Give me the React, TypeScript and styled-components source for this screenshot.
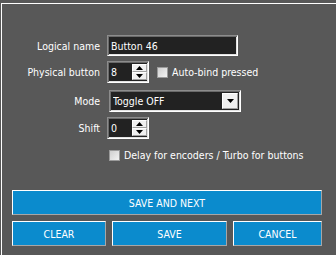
import React from 'react'
import styled, {createGlobalStyle} from 'styled-components'

const GlobalStyle = createGlobalStyle`
  html, body {
    margin: 0;
    padding: 0;
    background: #585858;
    overflow: hidden;
  }
  body {
    font-family: "DejaVu Sans Condensed", "Liberation Sans", sans-serif;
    font-size: 10.5px;
    color: #ffffff;
  }
`

const Page = styled.div`
  width: 336px;
  height: 255px;
  padding: 3px 0 0 1px;
  box-sizing: border-box;
  overflow: hidden;
`

const GroupBox = styled.div`
  width: 350px;
  height: 270px;
  box-sizing: border-box;
  border-top: 1px solid #ffffff;
  border-left: 1px solid #ffffff;
  padding: 31px 0 0 0;
`

const Form = styled.div`
  display: flex;
  flex-direction: column;
  padding-left: 6px;
`

const Row = styled.div<{$top: number}>`
  display: grid;
  grid-template-columns: 92px auto;
  column-gap: 7px;
  align-items: center;
  margin-top: ${(p) => p.$top}px;
`

const Label = styled.label`
  justify-self: end;
  white-space: nowrap;
`

const Field = styled.div`
  display: flex;
  align-items: center;
`

const Sunken = styled.div<{$w: number; $h: number}>`
  width: ${(p) => p.$w}px;
  height: ${(p) => p.$h}px;
  box-sizing: border-box;
  background: #222222;
  border-top: 1px solid #8c8c8c;
  border-left: 1px solid #8c8c8c;
  border-right: 1px solid #ffffff;
  border-bottom: 1px solid #ffffff;
  box-shadow: inset 1px 1px 0 #6a6a6a, inset -1px -1px 0 #e2e2e2;
  display: flex;
  align-items: center;
  padding: 2px 2px 2px 3px;
  white-space: nowrap;
`

const SpinField = styled(Sunken)`
  padding-right: 1px;
`

const ComboBox = styled(Sunken)`
  margin-left: 2px;
`

const Value = styled.span`
  flex: 1;
  overflow: hidden;
`

const SpinButtons = styled.div`
  display: flex;
  flex-direction: column;
  width: 15px;
  height: 100%;
`

const ArrowButton = styled.div`
  flex: 1;
  display: flex;
  align-items: center;
  justify-content: center;
  background: #f0f0f0;
  box-sizing: border-box;
  border-top: 1px solid #ffffff;
  border-left: 1px solid #ffffff;
  border-right: 1px solid #a0a0a0;
  border-bottom: 1px solid #a0a0a0;
`

const DropButton = styled(ArrowButton)`
  flex: none;
  width: 16px;
  height: 100%;
`

const Check = styled.span<{$left: number}>`
  width: 11px;
  height: 11px;
  box-sizing: border-box;
  margin-left: ${(p) => p.$left}px;
  margin-right: 4px;
  border: 1px solid #9a9a9a;
  background: linear-gradient(135deg, #cfcfcf, #f2f2f2);
  flex: none;
`

const CheckText = styled.span`
  white-space: nowrap;
`

const Buttons = styled.div`
  display: flex;
  flex-direction: column;
  gap: 6px;
  margin: 29px 0 0 10px;
  width: 310px;
`

const ButtonRow = styled.div`
  display: grid;
  grid-template-columns: 94px 115px 89px;
  column-gap: 6px;
`

const Button = styled.button`
  height: 25px;
  box-sizing: border-box;
  background: #0b8bcd;
  color: #ffffff;
  font-family: inherit;
  font-size: 10.5px;
  border-top: 1px solid #ffffff;
  border-left: 1px solid #ffffff;
  border-right: 1px solid #a6a6a6;
  border-bottom: 1px solid #a6a6a6;
  padding: 0;
  text-transform: uppercase;
`

const Up = () => (
  <svg width="7" height="4" viewBox="0 0 7 4">
    <polygon points="3.5,0 7,4 0,4" fill="#000" />
  </svg>
)

const Down = () => (
  <svg width="7" height="4" viewBox="0 0 7 4">
    <polygon points="0,0 7,0 3.5,4" fill="#000" />
  </svg>
)

const SpinBox = ({value}: {value: string}) => (
  <SpinField $w={42} $h={22}>
    <Value>{value}</Value>
    <SpinButtons>
      <ArrowButton>
        <Up />
      </ArrowButton>
      <ArrowButton>
        <Down />
      </ArrowButton>
    </SpinButtons>
  </SpinField>
)

export default function App() {
  return (
    <Page>
      <GlobalStyle />
      <GroupBox>
        <Form>
          <Row $top={0}>
            <Label>Logical name</Label>
            <Sunken $w={131} $h={21}>
              <Value>Button 46</Value>
            </Sunken>
          </Row>
          <Row $top={5}>
            <Label>Physical button</Label>
            <Field>
              <SpinBox value="8" />
              <Check $left={8} />
              <CheckText>Auto-bind pressed</CheckText>
            </Field>
          </Row>
          <Row $top={7}>
            <Label>Mode</Label>
            <ComboBox $w={132} $h={22}>
              <Value>Toggle OFF</Value>
              <DropButton>
                <Down />
              </DropButton>
            </ComboBox>
          </Row>
          <Row $top={5}>
            <Label>Shift</Label>
            <SpinBox value="0" />
          </Row>
          <Row $top={10}>
            <span />
            <Field>
              <Check $left={2} />
              <CheckText>Delay for encoders / Turbo for buttons</CheckText>
            </Field>
          </Row>
        </Form>
        <Buttons>
          <Button>Save and next</Button>
          <ButtonRow>
            <Button>Clear</Button>
            <Button>Save</Button>
            <Button>Cancel</Button>
          </ButtonRow>
        </Buttons>
      </GroupBox>
    </Page>
  )
}
